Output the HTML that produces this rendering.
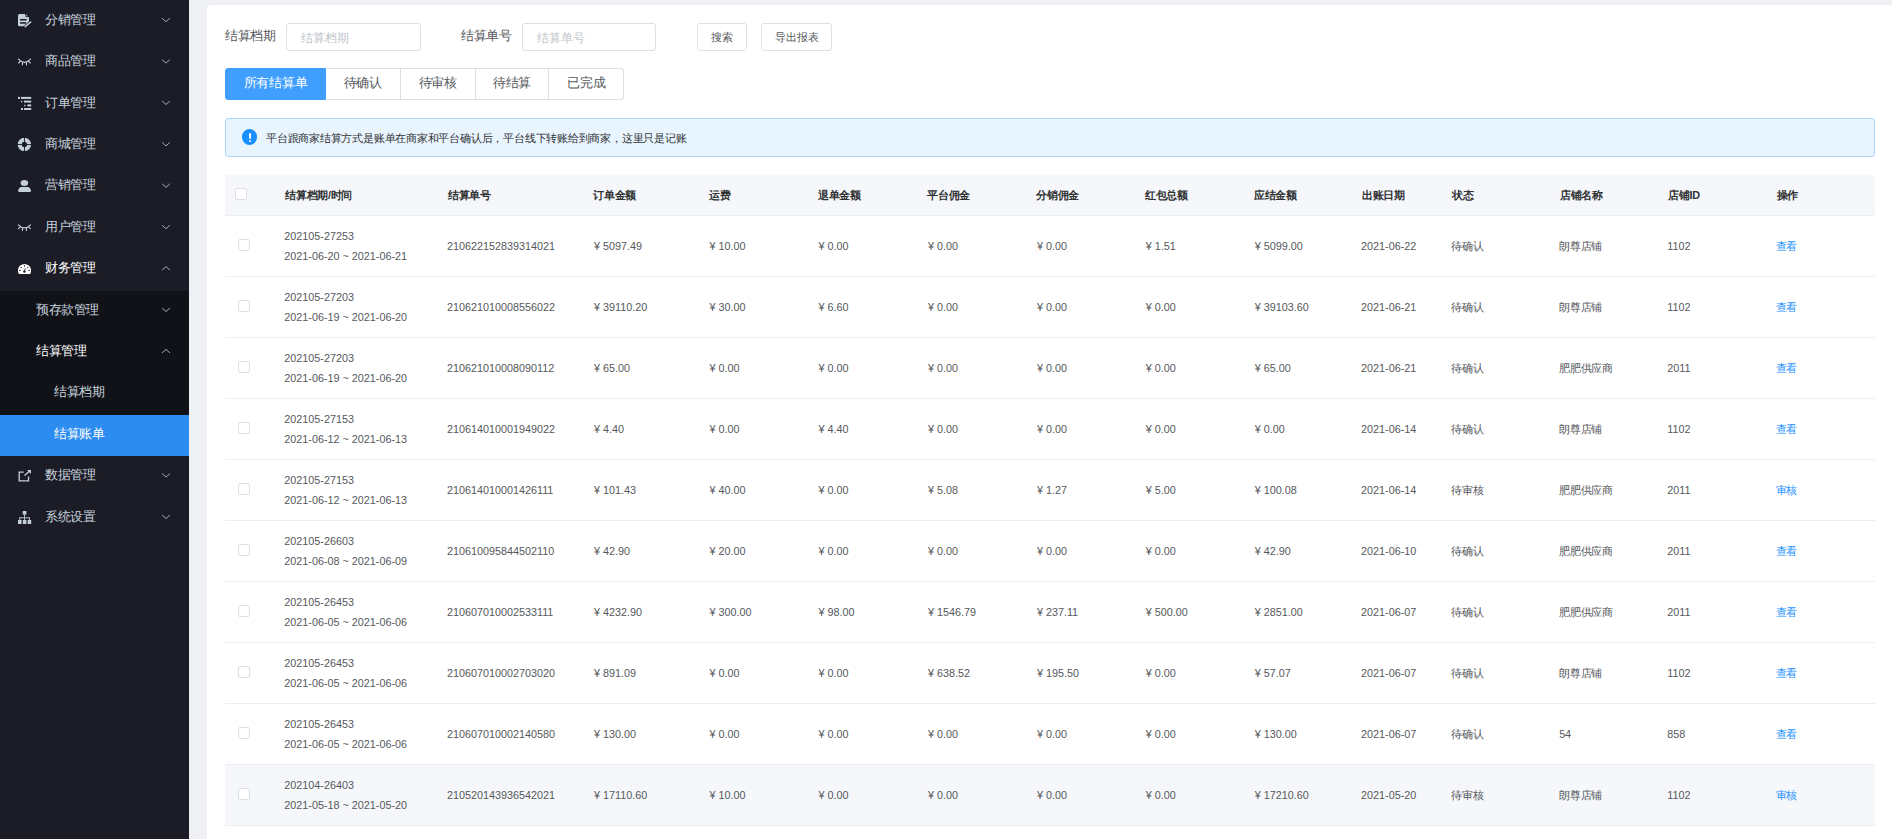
<!DOCTYPE html><html><head><meta charset="utf-8"><title>结算账单</title><style>
*{box-sizing:border-box;margin:0;padding:0}
html,body{width:1892px;height:839px;overflow:hidden}
body{position:relative;background:#eef0f4;font-family:"Liberation Sans",sans-serif;color:#606266}
.side{position:absolute;left:0;top:0;width:189px;height:839px;background:#1b1c25}
.side .edge{position:absolute;left:188px;top:0;width:1px;height:839px;background:#0c0d12}
.sub{position:absolute;left:0;top:290.6px;width:189px;height:165.6px;background:#111218}
.mi{position:absolute;left:0;width:189px;height:41.4px;font-size:12.6px;line-height:41.4px;color:#c8d2de;white-space:nowrap}
.mi .t{position:absolute;left:45px;top:-1px;letter-spacing:-0.4px;font-weight:500}
.mi svg.ic{position:absolute;left:17px;top:13.7px;width:15px;height:15px}
.mi .chev{position:absolute;left:161.5px;top:17px;width:9px;height:6px}
.mi.w{color:#fff}
.mi.sel{background:#2d8cf0;color:#fff}
.card{position:absolute;left:207px;top:5px;width:1686px;height:900px;background:#fff;border-radius:3px}
.lbl{position:absolute;font-size:12.6px;letter-spacing:-0.5px;line-height:16px;color:#55575c;white-space:nowrap}
.inp{position:absolute;height:27.5px;border:1px solid #dcdfe6;border-radius:3px;background:#fff}
.inp span{position:absolute;left:14px;top:5.5px;font-size:11.7px;line-height:16px;color:#c0c4cc;white-space:nowrap}
.btn{position:absolute;height:27.5px;border:1px solid #dcdfe6;border-radius:3px;background:#fff;font-size:11.3px;line-height:26.5px;text-align:center;color:#55575c;white-space:nowrap}
.tabs{position:absolute;left:225px;top:68px;width:400px;height:31.5px}
.tab{position:absolute;top:0;height:31.5px;border:1px solid #dcdfe6;border-left:0;font-size:12.6px;letter-spacing:-0.32px;line-height:29.5px;text-align:center;color:#55575c;background:#fff;white-space:nowrap}
.tab.act{border:1px solid #409eff;background:#409eff;color:#fff;border-radius:3px 0 0 3px}
.tab:last-child{border-radius:0 3px 3px 0}
.alert{position:absolute;left:225px;top:118px;width:1650px;height:39px;background:#e8f4fe;border:1px solid #abd5fb;border-radius:3px}
.alert .ai{position:absolute;left:15.8px;top:10.1px;width:15.7px;height:15.7px;border-radius:50%;background:#1a8fff}
.alert .ai::before{content:"";position:absolute;left:7px;top:3.5px;width:2px;height:6px;background:#fff;border-radius:1px}
.alert .ai::after{content:"";position:absolute;left:7px;top:10.5px;width:2px;height:2px;background:#fff;border-radius:1px}
.alert .at{position:absolute;left:40px;top:11px;font-size:11px;letter-spacing:-0.22px;line-height:16px;color:#303133;white-space:nowrap}
.thead{position:absolute;left:225px;width:1650px;background:#f5f7fa;border-bottom:1px solid #ebeef5}
.th{position:absolute;top:12px;margin-left:1px;font-size:10.8px;letter-spacing:-0.35px;line-height:16px;font-weight:bold;color:#303133;white-space:nowrap}
.cb{position:absolute;width:12px;height:12px;border:1px solid #dcdfe6;border-radius:2px;background:#fff}
.tr{position:absolute;left:225px;width:1650px;height:61px;border-bottom:1px solid #ebeef5;background:#fff}
.tr.hov{background:#f5f7fa}
.td{position:absolute;top:22px;font-size:10.8px;line-height:16px;color:#55575c;white-space:nowrap}
.td.two{top:10px;line-height:20px}
.td.link{color:#2593ff}
.yen{display:inline-block;width:10.6px;padding-left:1.6px}

.td.cjk{letter-spacing:-0.25px}

</style></head><body>
<div class="side"><div class="sub"></div><div class="mi sel" style="top:414.8px"></div>
<div class="mi" style="top:0.8px"><span class="t" style="left:45px">分销管理</span></div>
<div class="mi" style="top:42.2px"><span class="t" style="left:45px">商品管理</span></div>
<div class="mi" style="top:83.6px"><span class="t" style="left:45px">订单管理</span></div>
<div class="mi" style="top:125.0px"><span class="t" style="left:45px">商城管理</span></div>
<div class="mi" style="top:166.4px"><span class="t" style="left:45px">营销管理</span></div>
<div class="mi" style="top:207.8px"><span class="t" style="left:45px">用户管理</span></div>
<div class="mi w" style="top:249.2px"><span class="t" style="left:45px">财务管理</span></div>
<div class="mi" style="top:290.6px"><span class="t" style="left:36px">预存款管理</span></div>
<div class="mi w" style="top:332.0px"><span class="t" style="left:36px">结算管理</span></div>
<div class="mi" style="top:373.4px"><span class="t" style="left:54px">结算档期</span></div>
<div class="mi w" style="top:414.8px"><span class="t" style="left:54px">结算账单</span></div>
<div class="mi" style="top:456.2px"><span class="t" style="left:45px">数据管理</span></div>
<div class="mi" style="top:497.6px"><span class="t" style="left:45px">系统设置</span></div>
</div>
<svg class="sideicons" width="189" height="839" viewBox="0 0 189 839" style="position:absolute;left:0;top:0">
<path d="M162.1 18.2 L166 21.7 L169.9 18.2" fill="none" stroke="#a3adb9" stroke-width="1"/>
<path d="M162.1 59.6 L166 63.1 L169.9 59.6" fill="none" stroke="#a3adb9" stroke-width="1"/>
<path d="M162.1 101.0 L166 104.5 L169.9 101.0" fill="none" stroke="#a3adb9" stroke-width="1"/>
<path d="M162.1 142.4 L166 145.9 L169.9 142.4" fill="none" stroke="#a3adb9" stroke-width="1"/>
<path d="M162.1 183.8 L166 187.3 L169.9 183.8" fill="none" stroke="#a3adb9" stroke-width="1"/>
<path d="M162.1 225.2 L166 228.7 L169.9 225.2" fill="none" stroke="#a3adb9" stroke-width="1"/>
<path d="M162.1 270.1 L166 266.6 L169.9 270.1" fill="none" stroke="#a3adb9" stroke-width="1"/>
<path d="M162.1 308.0 L166 311.5 L169.9 308.0" fill="none" stroke="#a3adb9" stroke-width="1"/>
<path d="M162.1 352.9 L166 349.4 L169.9 352.9" fill="none" stroke="#a3adb9" stroke-width="1"/>
<path d="M162.1 473.6 L166 477.1 L169.9 473.6" fill="none" stroke="#a3adb9" stroke-width="1"/>
<path d="M162.1 515.0 L166 518.5 L169.9 515.0" fill="none" stroke="#a3adb9" stroke-width="1"/>
<g fill="#c5cfdc">
<path d="M19.5 13.9 H25.6 L29 17.2 V23.5 L25.2 26.3 H19.5 Q18 26.3 18 24.8 V15.4 Q18 13.9 19.5 13.9 Z"/>
</g>
<path d="M25.8 13.9 V16.6 H29" fill="none" stroke="#1b1c25" stroke-width="0.9"/>
<rect x="20.1" y="19" width="6.5" height="1.5" fill="#1b1c25"/>
<rect x="20.1" y="22.2" width="6" height="1.5" fill="#1b1c25"/>
<path d="M24.2 27.6 L31.2 21.4" stroke="#1b1c25" stroke-width="3"/>
<path d="M25.1 26.6 L30.6 22.1" stroke="#c5cfdc" stroke-width="1.6" stroke-linecap="round"/>
<g transform="translate(0 0.0)" fill="none" stroke="#c5cfdc" stroke-width="1.15" stroke-linecap="round">
<path d="M18.4 59.2 Q24.4 65.4 30.5 59.2"/>
<path d="M20.2 61.3 L18.6 63.0"/><path d="M28.6 61.3 L30.3 63.0"/>
<path d="M22.5 62.6 L22.4 64.8"/><path d="M26.4 62.6 L26.5 64.8"/>
</g>
<g transform="translate(0 165.6)" fill="none" stroke="#c5cfdc" stroke-width="1.15" stroke-linecap="round">
<path d="M18.4 59.2 Q24.4 65.4 30.5 59.2"/>
<path d="M20.2 61.3 L18.6 63.0"/><path d="M28.6 61.3 L30.3 63.0"/>
<path d="M22.5 62.6 L22.4 64.8"/><path d="M26.4 62.6 L26.5 64.8"/>
</g>
<g fill="#c5cfdc">
<rect x="18" y="96.9" width="2" height="2"/><rect x="21" y="96.9" width="10.2" height="2"/>
<path d="M21 100.6 L23 101.6 L21 102.6 Z"/><rect x="24" y="100.6" width="7.2" height="2"/>
<path d="M24.2 104.4 L26 105.4 L24.2 106.4 Z"/><rect x="27.4" y="104.4" width="3.8" height="2"/>
<rect x="21" y="108" width="2" height="2"/><rect x="24" y="108" width="7.2" height="2"/>
</g>
<g>
<circle cx="24.4" cy="144.4" r="4.65" fill="none" stroke="#c5cfdc" stroke-width="4.1"/>
<rect x="24" y="136" width="0.9" height="17" fill="#1b1c25"/>
<rect x="15.5" y="144" width="17" height="0.9" fill="#1b1c25"/>
</g>
<g fill="#c5cfdc">
<ellipse cx="24.4" cy="182.9" rx="3.8" ry="3.0"/>
<path d="M20.6 186.9 H28.4 Q30.2 187.4 31.1 190.6 Q31.2 192 29.8 192 H19.3 Q17.9 192 18.1 190.6 Q18.9 187.4 20.6 186.9 Z"/>
</g>
<g>
<path d="M18.9 274 A6.6 6.6 0 1 1 30.1 274 Z" fill="#ffffff"/>
<circle cx="24.4" cy="271.6" r="1.2" fill="#1b1c25"/>
<path d="M24.4 271.4 L25.4 268.2" stroke="#1b1c25" stroke-width="0.8"/>
<rect x="24" y="265.1" width="0.9" height="1.5" fill="#1b1c25"/>
<ellipse cx="21.2" cy="267.5" rx="0.8" ry="0.55" fill="#1b1c25"/>
<ellipse cx="27.7" cy="267.5" rx="0.8" ry="0.55" fill="#1b1c25"/>
<ellipse cx="19.9" cy="270.4" rx="0.8" ry="0.55" fill="#1b1c25"/>
<ellipse cx="29.1" cy="270.4" rx="0.8" ry="0.55" fill="#1b1c25"/>
</g>
<g fill="none" stroke="#c5cfdc" stroke-width="1.3">
<path d="M23.7 472.2 H19.2 V480.8 H28.5 V476.4"/>
<path d="M24.5 475.6 L30.0 470.8"/>
</g>
<path d="M27.1 469.9 H31 V473.9 Z" fill="#c5cfdc"/>
<g fill="#c5cfdc">
<rect x="22.7" y="511" width="3.7" height="3.6"/>
<rect x="24.1" y="514.4" width="0.9" height="5.8"/>
<rect x="19.3" y="517.4" width="10.5" height="0.9"/>
<rect x="19.3" y="517.4" width="0.9" height="2.8"/>
<rect x="28.9" y="517.4" width="0.9" height="2.8"/>
<rect x="18" y="520" width="3.6" height="4"/>
<rect x="22.8" y="520" width="3.6" height="4"/>
<rect x="27.6" y="520" width="3.6" height="4"/>
</g>
</svg>
<div class="card"></div>
<div class="lbl" style="left:225px;top:28px">结算档期</div>
<div class="inp" style="left:286px;top:23px;width:135px"><span>结算档期</span></div>
<div class="lbl" style="left:461px;top:28px">结算单号</div>
<div class="inp" style="left:522px;top:23px;width:134px"><span>结算单号</span></div>
<div class="btn" style="left:697px;top:23px;width:50px">搜索</div>
<div class="btn" style="left:761px;top:23px;width:71px">导出报表</div>
<div class="tabs">
<div class="tab act" style="left:0px;width:101px">所有结算单</div>
<div class="tab" style="left:101px;width:74.5px">待确认</div>
<div class="tab" style="left:175.5px;width:75.10000000000002px">待审核</div>
<div class="tab" style="left:250.60000000000002px;width:73.69999999999993px">待结算</div>
<div class="tab" style="left:324.29999999999995px;width:75.10000000000002px">已完成</div>
</div>
<div class="alert"><div class="ai"></div><div class="at">平台跟商家结算方式是账单在商家和平台确认后，平台线下转账给到商家，这里只是记账</div></div>
<div class="thead" style="top:175px;height:40.5px">
<div class="cb" style="left:9.5px;top:13px"></div>
<div class="th" style="left:59.3px">结算档期/时间</div>
<div class="th" style="left:221.9px">结算单号</div>
<div class="th" style="left:367.4px">订单金额</div>
<div class="th" style="left:483.0px">运费</div>
<div class="th" style="left:591.9px">退单金额</div>
<div class="th" style="left:701.4px">平台佣金</div>
<div class="th" style="left:810.3px">分销佣金</div>
<div class="th" style="left:919.2px">红包总额</div>
<div class="th" style="left:1028.1px">应结金额</div>
<div class="th" style="left:1136.1px">出账日期</div>
<div class="th" style="left:1226.0px">状态</div>
<div class="th" style="left:1334.2px">店铺名称</div>
<div class="th" style="left:1442.3px">店铺ID</div>
<div class="th" style="left:1550.7px">操作</div>
</div>
<div class="tr" style="top:215.5px">
<div class="cb" style="left:13px;top:23.5px"></div>
<div class="td two" style="left:59.3px"><div>202105-27253</div><div>2021-06-20 ~ 2021-06-21</div></div>
<div class="td" style="left:221.9px">210622152839314021</div>
<div class="td" style="left:367.4px"><span class="yen">¥</span>5097.49</div>
<div class="td" style="left:483.0px"><span class="yen">¥</span>10.00</div>
<div class="td" style="left:591.9px"><span class="yen">¥</span>0.00</div>
<div class="td" style="left:701.4px"><span class="yen">¥</span>0.00</div>
<div class="td" style="left:810.3px"><span class="yen">¥</span>0.00</div>
<div class="td" style="left:919.2px"><span class="yen">¥</span>1.51</div>
<div class="td" style="left:1028.1px"><span class="yen">¥</span>5099.00</div>
<div class="td" style="left:1136.1px">2021-06-22</div>
<div class="td cjk" style="left:1226.0px">待确认</div>
<div class="td cjk" style="left:1334.2px">朗尊店铺</div>
<div class="td" style="left:1442.3px">1102</div>
<div class="td link cjk" style="left:1550.7px">查看</div>
</div>
<div class="tr" style="top:276.5px">
<div class="cb" style="left:13px;top:23.5px"></div>
<div class="td two" style="left:59.3px"><div>202105-27203</div><div>2021-06-19 ~ 2021-06-20</div></div>
<div class="td" style="left:221.9px">210621010008556022</div>
<div class="td" style="left:367.4px"><span class="yen">¥</span>39110.20</div>
<div class="td" style="left:483.0px"><span class="yen">¥</span>30.00</div>
<div class="td" style="left:591.9px"><span class="yen">¥</span>6.60</div>
<div class="td" style="left:701.4px"><span class="yen">¥</span>0.00</div>
<div class="td" style="left:810.3px"><span class="yen">¥</span>0.00</div>
<div class="td" style="left:919.2px"><span class="yen">¥</span>0.00</div>
<div class="td" style="left:1028.1px"><span class="yen">¥</span>39103.60</div>
<div class="td" style="left:1136.1px">2021-06-21</div>
<div class="td cjk" style="left:1226.0px">待确认</div>
<div class="td cjk" style="left:1334.2px">朗尊店铺</div>
<div class="td" style="left:1442.3px">1102</div>
<div class="td link cjk" style="left:1550.7px">查看</div>
</div>
<div class="tr" style="top:337.5px">
<div class="cb" style="left:13px;top:23.5px"></div>
<div class="td two" style="left:59.3px"><div>202105-27203</div><div>2021-06-19 ~ 2021-06-20</div></div>
<div class="td" style="left:221.9px">210621010008090112</div>
<div class="td" style="left:367.4px"><span class="yen">¥</span>65.00</div>
<div class="td" style="left:483.0px"><span class="yen">¥</span>0.00</div>
<div class="td" style="left:591.9px"><span class="yen">¥</span>0.00</div>
<div class="td" style="left:701.4px"><span class="yen">¥</span>0.00</div>
<div class="td" style="left:810.3px"><span class="yen">¥</span>0.00</div>
<div class="td" style="left:919.2px"><span class="yen">¥</span>0.00</div>
<div class="td" style="left:1028.1px"><span class="yen">¥</span>65.00</div>
<div class="td" style="left:1136.1px">2021-06-21</div>
<div class="td cjk" style="left:1226.0px">待确认</div>
<div class="td cjk" style="left:1334.2px">肥肥供应商</div>
<div class="td" style="left:1442.3px">2011</div>
<div class="td link cjk" style="left:1550.7px">查看</div>
</div>
<div class="tr" style="top:398.5px">
<div class="cb" style="left:13px;top:23.5px"></div>
<div class="td two" style="left:59.3px"><div>202105-27153</div><div>2021-06-12 ~ 2021-06-13</div></div>
<div class="td" style="left:221.9px">210614010001949022</div>
<div class="td" style="left:367.4px"><span class="yen">¥</span>4.40</div>
<div class="td" style="left:483.0px"><span class="yen">¥</span>0.00</div>
<div class="td" style="left:591.9px"><span class="yen">¥</span>4.40</div>
<div class="td" style="left:701.4px"><span class="yen">¥</span>0.00</div>
<div class="td" style="left:810.3px"><span class="yen">¥</span>0.00</div>
<div class="td" style="left:919.2px"><span class="yen">¥</span>0.00</div>
<div class="td" style="left:1028.1px"><span class="yen">¥</span>0.00</div>
<div class="td" style="left:1136.1px">2021-06-14</div>
<div class="td cjk" style="left:1226.0px">待确认</div>
<div class="td cjk" style="left:1334.2px">朗尊店铺</div>
<div class="td" style="left:1442.3px">1102</div>
<div class="td link cjk" style="left:1550.7px">查看</div>
</div>
<div class="tr" style="top:459.5px">
<div class="cb" style="left:13px;top:23.5px"></div>
<div class="td two" style="left:59.3px"><div>202105-27153</div><div>2021-06-12 ~ 2021-06-13</div></div>
<div class="td" style="left:221.9px">210614010001426111</div>
<div class="td" style="left:367.4px"><span class="yen">¥</span>101.43</div>
<div class="td" style="left:483.0px"><span class="yen">¥</span>40.00</div>
<div class="td" style="left:591.9px"><span class="yen">¥</span>0.00</div>
<div class="td" style="left:701.4px"><span class="yen">¥</span>5.08</div>
<div class="td" style="left:810.3px"><span class="yen">¥</span>1.27</div>
<div class="td" style="left:919.2px"><span class="yen">¥</span>5.00</div>
<div class="td" style="left:1028.1px"><span class="yen">¥</span>100.08</div>
<div class="td" style="left:1136.1px">2021-06-14</div>
<div class="td cjk" style="left:1226.0px">待审核</div>
<div class="td cjk" style="left:1334.2px">肥肥供应商</div>
<div class="td" style="left:1442.3px">2011</div>
<div class="td link cjk" style="left:1550.7px">审核</div>
</div>
<div class="tr" style="top:520.5px">
<div class="cb" style="left:13px;top:23.5px"></div>
<div class="td two" style="left:59.3px"><div>202105-26603</div><div>2021-06-08 ~ 2021-06-09</div></div>
<div class="td" style="left:221.9px">210610095844502110</div>
<div class="td" style="left:367.4px"><span class="yen">¥</span>42.90</div>
<div class="td" style="left:483.0px"><span class="yen">¥</span>20.00</div>
<div class="td" style="left:591.9px"><span class="yen">¥</span>0.00</div>
<div class="td" style="left:701.4px"><span class="yen">¥</span>0.00</div>
<div class="td" style="left:810.3px"><span class="yen">¥</span>0.00</div>
<div class="td" style="left:919.2px"><span class="yen">¥</span>0.00</div>
<div class="td" style="left:1028.1px"><span class="yen">¥</span>42.90</div>
<div class="td" style="left:1136.1px">2021-06-10</div>
<div class="td cjk" style="left:1226.0px">待确认</div>
<div class="td cjk" style="left:1334.2px">肥肥供应商</div>
<div class="td" style="left:1442.3px">2011</div>
<div class="td link cjk" style="left:1550.7px">查看</div>
</div>
<div class="tr" style="top:581.5px">
<div class="cb" style="left:13px;top:23.5px"></div>
<div class="td two" style="left:59.3px"><div>202105-26453</div><div>2021-06-05 ~ 2021-06-06</div></div>
<div class="td" style="left:221.9px">210607010002533111</div>
<div class="td" style="left:367.4px"><span class="yen">¥</span>4232.90</div>
<div class="td" style="left:483.0px"><span class="yen">¥</span>300.00</div>
<div class="td" style="left:591.9px"><span class="yen">¥</span>98.00</div>
<div class="td" style="left:701.4px"><span class="yen">¥</span>1546.79</div>
<div class="td" style="left:810.3px"><span class="yen">¥</span>237.11</div>
<div class="td" style="left:919.2px"><span class="yen">¥</span>500.00</div>
<div class="td" style="left:1028.1px"><span class="yen">¥</span>2851.00</div>
<div class="td" style="left:1136.1px">2021-06-07</div>
<div class="td cjk" style="left:1226.0px">待确认</div>
<div class="td cjk" style="left:1334.2px">肥肥供应商</div>
<div class="td" style="left:1442.3px">2011</div>
<div class="td link cjk" style="left:1550.7px">查看</div>
</div>
<div class="tr" style="top:642.5px">
<div class="cb" style="left:13px;top:23.5px"></div>
<div class="td two" style="left:59.3px"><div>202105-26453</div><div>2021-06-05 ~ 2021-06-06</div></div>
<div class="td" style="left:221.9px">210607010002703020</div>
<div class="td" style="left:367.4px"><span class="yen">¥</span>891.09</div>
<div class="td" style="left:483.0px"><span class="yen">¥</span>0.00</div>
<div class="td" style="left:591.9px"><span class="yen">¥</span>0.00</div>
<div class="td" style="left:701.4px"><span class="yen">¥</span>638.52</div>
<div class="td" style="left:810.3px"><span class="yen">¥</span>195.50</div>
<div class="td" style="left:919.2px"><span class="yen">¥</span>0.00</div>
<div class="td" style="left:1028.1px"><span class="yen">¥</span>57.07</div>
<div class="td" style="left:1136.1px">2021-06-07</div>
<div class="td cjk" style="left:1226.0px">待确认</div>
<div class="td cjk" style="left:1334.2px">朗尊店铺</div>
<div class="td" style="left:1442.3px">1102</div>
<div class="td link cjk" style="left:1550.7px">查看</div>
</div>
<div class="tr" style="top:703.5px">
<div class="cb" style="left:13px;top:23.5px"></div>
<div class="td two" style="left:59.3px"><div>202105-26453</div><div>2021-06-05 ~ 2021-06-06</div></div>
<div class="td" style="left:221.9px">210607010002140580</div>
<div class="td" style="left:367.4px"><span class="yen">¥</span>130.00</div>
<div class="td" style="left:483.0px"><span class="yen">¥</span>0.00</div>
<div class="td" style="left:591.9px"><span class="yen">¥</span>0.00</div>
<div class="td" style="left:701.4px"><span class="yen">¥</span>0.00</div>
<div class="td" style="left:810.3px"><span class="yen">¥</span>0.00</div>
<div class="td" style="left:919.2px"><span class="yen">¥</span>0.00</div>
<div class="td" style="left:1028.1px"><span class="yen">¥</span>130.00</div>
<div class="td" style="left:1136.1px">2021-06-07</div>
<div class="td cjk" style="left:1226.0px">待确认</div>
<div class="td cjk" style="left:1334.2px">54</div>
<div class="td" style="left:1442.3px">858</div>
<div class="td link cjk" style="left:1550.7px">查看</div>
</div>
<div class="tr hov" style="top:764.5px">
<div class="cb" style="left:13px;top:23.5px"></div>
<div class="td two" style="left:59.3px"><div>202104-26403</div><div>2021-05-18 ~ 2021-05-20</div></div>
<div class="td" style="left:221.9px">210520143936542021</div>
<div class="td" style="left:367.4px"><span class="yen">¥</span>17110.60</div>
<div class="td" style="left:483.0px"><span class="yen">¥</span>10.00</div>
<div class="td" style="left:591.9px"><span class="yen">¥</span>0.00</div>
<div class="td" style="left:701.4px"><span class="yen">¥</span>0.00</div>
<div class="td" style="left:810.3px"><span class="yen">¥</span>0.00</div>
<div class="td" style="left:919.2px"><span class="yen">¥</span>0.00</div>
<div class="td" style="left:1028.1px"><span class="yen">¥</span>17210.60</div>
<div class="td" style="left:1136.1px">2021-05-20</div>
<div class="td cjk" style="left:1226.0px">待审核</div>
<div class="td cjk" style="left:1334.2px">朗尊店铺</div>
<div class="td" style="left:1442.3px">1102</div>
<div class="td link cjk" style="left:1550.7px">审核</div>
</div>
</body></html>
